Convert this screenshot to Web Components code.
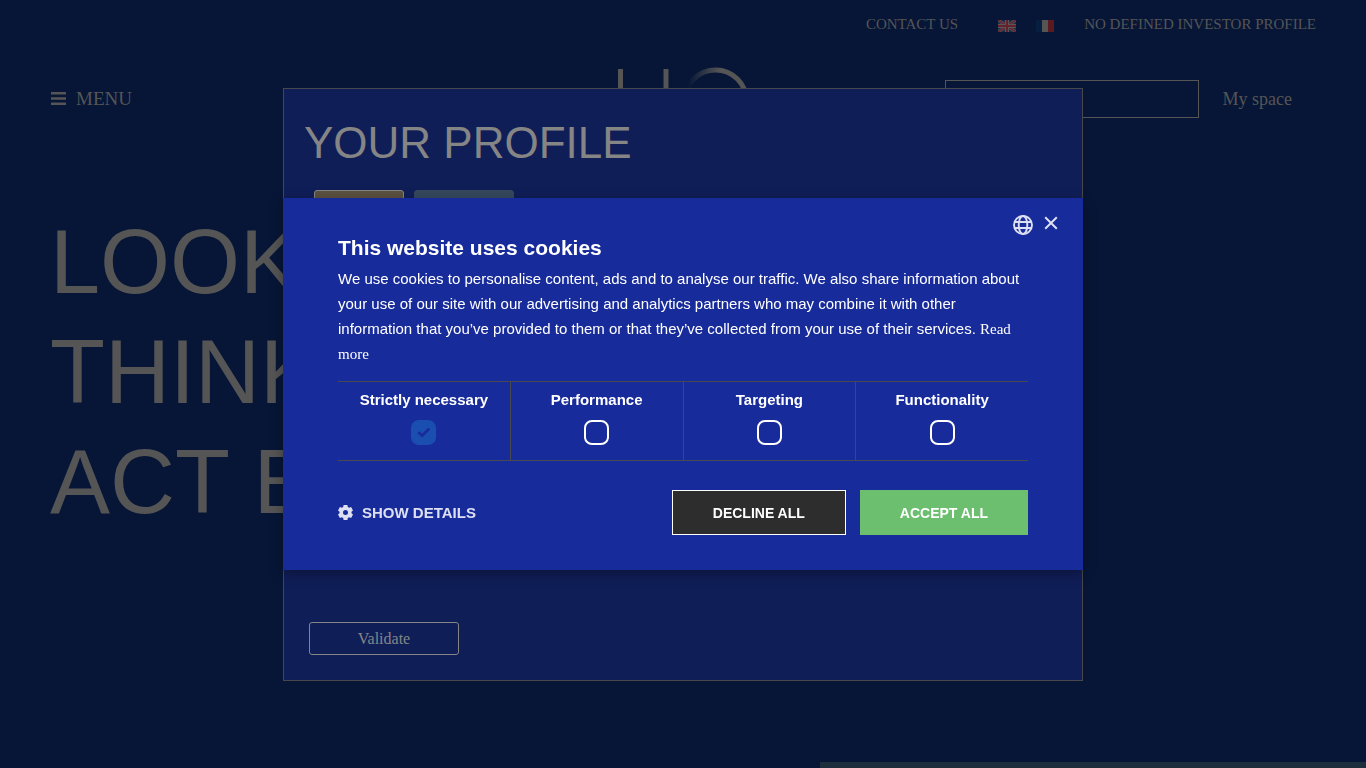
<!DOCTYPE html>
<html lang="en">
<head>
<meta charset="utf-8">
<title>Your profile</title>
<style>
  body {
    margin: 0;
    background: #071637;
    color: #555;
    font-family: "Liberation Serif", serif;
  }
  main {
    display: flex;
    flex-direction: column;
    height: 100vh;
    overflow: hidden;
  }
</style>
</head>
<body>
<main>
  <site-header></site-header>
  <hero-title>
    <span>LOOK</span>
    <span>THINK</span>
    <span>ACT E</span>
  </hero-title>
  <bottom-strip></bottom-strip>
</main>
<profile-dialog></profile-dialog>
<cookie-dialog>
  <span slot="title">This website uses cookies</span>
  We use cookies to personalise content, ads and to analyse our traffic. We also share information about your use of our site with our advertising and analytics partners who may combine it with other information that you’ve provided to them or that they’ve collected from your use of their services.
  <cookie-category slot="categories" label="Strictly necessary" required></cookie-category>
  <cookie-category slot="categories" label="Performance"></cookie-category>
  <cookie-category slot="categories" label="Targeting"></cookie-category>
  <cookie-category slot="categories" label="Functionality"></cookie-category>
</cookie-dialog>

<script>
class BaseElement extends HTMLElement {
  connectedCallback() {
    if (this.shadowRoot) return;
    this.attachShadow({ mode: "open" });
    const template = document.createElement("template");
    template.innerHTML = `<style>${this.constructor.style}</style>${this.template}`;
    this.shadowRoot.appendChild(template.content.cloneNode(true));
  }

  get template() {
    return "";
  }
}

class SiteHeader extends BaseElement {
  static get style() {
    return `
    :host {
      display: block;
      padding: 0 50px;
    }
    a {
      color: inherit;
      text-decoration: none;
    }
    svg {
      display: block;
    }
    .top {
      display: flex;
      justify-content: flex-end;
      align-items: center;
      height: 48px;
      font-size: 15px;
    }
    .flags {
      display: flex;
      gap: 20px;
      margin: 0 30px 0 40px;
      padding-top: 4px;
    }
    .bar {
      display: grid;
      grid-template-columns: 1fr auto 1fr;
      align-items: center;
      margin-top: 19px;
    }
    .menu {
      display: flex;
      align-items: center;
      gap: 10px;
      justify-self: start;
      border: 0;
      background: none;
      padding: 0 0 0 1px;
      color: inherit;
      font-family: inherit;
      font-size: 19px;
    }
    .tools {
      display: flex;
      justify-content: flex-end;
      align-items: center;
      gap: 24px;
      padding-right: 24px;
      font-size: 18px;
    }
    input {
      box-sizing: border-box;
      width: 254px;
      height: 38px;
      border: 1px solid #555;
      background: none;
      color: inherit;
      font: inherit;
    }
    `;
  }

  get template() {
    return `
    <nav class="top">
      <a href="#contact">CONTACT US</a>
      <div class="flags">
        <a href="#en" aria-label="English">
          <svg width="18" height="12" viewBox="0 0 18 12">
            <path fill="#1b2c4c" d="M0 0h18v12H0z"/>
            <path stroke="#5b5558" stroke-width="3" d="M0 0l18 12M18 0L0 12"/>
            <path stroke="#622832" stroke-width="1.8" d="M0 0l18 12M18 0L0 12"/>
            <path stroke="#5b5558" stroke-width="4" d="M9 0v12M0 6h18"/>
            <path stroke="#64232c" stroke-width="2" d="M9 0v12M0 6h18"/>
          </svg>
        </a>
        <a href="#fr" aria-label="Français">
          <svg width="18" height="12" viewBox="0 0 18 12">
            <path fill="#061f40" d="M0 0h6v12H0z"/>
            <path fill="#555" d="M6 0h6v12H6z"/>
            <path fill="#5b1a20" d="M12 0h6v12h-6z"/>
          </svg>
        </a>
      </div>
      <a href="#investor">NO DEFINED INVESTOR PROFILE</a>
    </nav>
    <div class="bar">
      <button class="menu">
        <svg width="15" height="14" viewBox="0 0 15 14" fill="currentColor">
          <path d="M0 0h15v2.6H0zM0 5.2h15v2.6H0zM0 10.4h15V13H0z"/>
        </svg>
        MENU
      </button>
      <svg width="133" height="64" viewBox="0 0 133 64" fill="none" stroke-width="5" role="img" aria-label="Home">
        <linearGradient id="fade" gradientUnits="userSpaceOnUse" x1="71" y1="0" x2="103" y2="0">
          <stop offset="0" stop-color="#555" stop-opacity="0"/>
          <stop offset="1" stop-color="#555"/>
        </linearGradient>
        <path stroke="#555" d="M3.500 2v60M49 2v60"/>
        <circle cx="98.500" cy="34" r="31" stroke="url(#fade)"/>
      </svg>
      <div class="tools">
        <input type="search" aria-label="Search">
        <a href="#space">My space</a>
      </div>
    </div>
    `;
  }
}

class HeroTitle extends BaseElement {
  static get style() {
    return `
    :host {
      display: block;
      padding: 76px 50px 0;
    }
    h1 {
      display: flex;
      flex-direction: column;
      margin: 0;
      font: 90px/110px "Liberation Sans", sans-serif;
    }
    `;
  }

  get template() {
    return `<h1><slot></slot></h1>`;
  }
}

class BottomStrip extends BaseElement {
  static get style() {
    return `
    :host {
      display: block;
      align-self: flex-end;
      width: 40%;
      height: 6px;
      margin-top: auto;
      background: #1f2e3c;
    }
    `;
  }
}

class ProfileDialog extends BaseElement {
  static get style() {
    return `
    :host {
      position: fixed;
      inset: 0;
      display: flex;
      justify-content: center;
      align-items: center;
    }
    section {
      box-sizing: border-box;
      display: flex;
      flex-direction: column;
      width: 800px;
      max-width: 100%;
      min-height: 593px;
      border: 1px solid #48484c;
      background: #101e58;
      padding: 29px 20px 25px;
      color: #858585;
    }
    h2 {
      margin: 0;
      font: 44px/50px "Liberation Sans", sans-serif;
    }
    .choices {
      display: flex;
      gap: 10px;
      margin: 22px 10px 0;
    }
    button {
      box-sizing: border-box;
      height: 33px;
      border: 1px solid #858585;
      border-radius: 3px;
      background: none;
      color: inherit;
      font-family: inherit;
      font-size: 16px;
    }
    .language {
      width: 90px;
      background: #5b5140;
    }
    .country {
      width: 100px;
      border-color: #35485c;
      background: #35485c;
    }
    .validate {
      width: 150px;
      margin: auto 5px 0;
      padding-top: 3px;
    }
    `;
  }

  get template() {
    return `
    <section role="dialog" aria-labelledby="title">
      <h2 id="title">YOUR PROFILE</h2>
      <div class="choices">
        <button class="language" aria-label="Language"></button>
        <button class="country" aria-label="Country"></button>
      </div>
      <button class="validate">Validate</button>
    </section>
    `;
  }
}

class CookieCategory extends BaseElement {
  static get style() {
    return `
    :host {
      flex: 1;
      border-right: 1px solid #48484f;
    }
    :host(:last-of-type) {
      border-right: 0;
    }
    label {
      display: flex;
      flex-direction: column;
      align-items: center;
      gap: 10px;
      padding: 8px 0 15px;
      font-size: 15px;
      font-weight: bold;
      line-height: 20px;
    }
    input {
      appearance: none;
      box-sizing: border-box;
      display: grid;
      place-items: center;
      width: 25px;
      height: 25px;
      margin: 0;
      border: 2px solid #fff;
      border-radius: 8px;
    }
    input:checked {
      border-color: #1a4eaf;
      background: #1a4eaf;
    }
    input:checked::after {
      content: "";
      width: 13px;
      height: 10px;
      background: #182b9a;
      clip-path: polygon(0 56%, 15% 38%, 36% 62%, 85% 0, 100% 17%, 37% 100%);
    }
    `;
  }

  get template() {
    const checked = this.hasAttribute("required") ? "checked disabled" : "";
    return `
    <label>${this.getAttribute("label")}
      <input type="checkbox" ${checked}>
    </label>
    `;
  }
}

class CookieDialog extends BaseElement {
  static get style() {
    return `
    :host {
      position: fixed;
      inset: 0;
      display: flex;
      justify-content: center;
      align-items: center;
      color: #fff;
      font-family: "Liberation Sans", sans-serif;
    }
    section {
      position: relative;
      box-sizing: border-box;
      width: 800px;
      max-width: 100%;
      background: #182b9a;
      box-shadow: 0 4px 12px rgba(0, 0, 0, 0.35);
      padding: 35px 55px;
    }
    svg {
      display: block;
    }
    button {
      border: 0;
      background: none;
      padding: 0;
      color: inherit;
      font-family: inherit;
      font-weight: bold;
    }
    .corner {
      position: absolute;
      top: 15px;
      right: 25px;
      display: flex;
      gap: 10px;
      color: #dde0f2;
    }
    h2 {
      margin: 0 0 3px;
      font-size: 21px;
      line-height: 30px;
    }
    p {
      margin: 0;
      font-size: 15px;
      line-height: 25px;
    }
    p a {
      color: inherit;
      font-family: "Liberation Serif", serif;
      line-height: 20px;
      text-decoration: none;
    }
    .categories {
      display: flex;
      margin: 15px 0 29px;
      border-top: 1px solid #48484f;
      border-bottom: 1px solid #48484f;
    }
    .actions {
      display: flex;
      align-items: center;
      gap: 14px;
    }
    .details {
      display: flex;
      align-items: center;
      gap: 9px;
      margin-right: auto;
      color: #dde0f2;
      font-size: 15px;
    }
    .decline,
    .accept {
      height: 45px;
      padding: 0 40px;
      font-size: 14px;
    }
    .decline {
      border: 1px solid #fff;
      background: #2d2d2d;
    }
    .accept {
      background: #6bbf6e;
    }
    `;
  }

  get template() {
    return `
    <section role="dialog" aria-labelledby="title">
      <div class="corner">
        <button aria-label="Language">
          <svg width="22" height="24" viewBox="0 0 22 24" fill="none" stroke="currentColor" stroke-width="1.900">
            <circle cx="11" cy="12" r="9"/>
            <ellipse cx="11" cy="12" rx="4.300" ry="9"/>
            <path d="M3 9h16M3 15h16"/>
          </svg>
        </button>
        <button aria-label="Close">
          <svg width="14" height="20" viewBox="0 0 14 20" fill="none" stroke="currentColor" stroke-width="2">
            <path d="M1.200 2.200l11.600 11.600M12.800 2.200L1.200 13.800"/>
          </svg>
        </button>
      </div>
      <h2 id="title"><slot name="title"></slot></h2>
      <p><slot></slot> <a href="#policy">Read more</a></p>
      <div class="categories"><slot name="categories"></slot></div>
      <div class="actions">
        <button class="details">
          <svg width="15" height="15" viewBox="0 0 15 15" fill="currentColor">
            <path fill-rule="evenodd" d="M5.600 0h3.800l.4 2 1.300.8 2-.7L15 5.400l-1.500 1.400v1.400L15 9.600l-1.900 3.300-2-.7-1.300.8-.4 2H5.600l-.4-2-1.300-.8-2 .7L0 9.600l1.500-1.400V6.800L0 5.400l1.900-3.300 2 .7L5.200 2zM7.500 5a2.500 2.500 0 1 0 0 5 2.500 2.500 0 0 0 0-5z"/>
          </svg>
          SHOW DETAILS
        </button>
        <button class="decline">DECLINE ALL</button>
        <button class="accept">ACCEPT ALL</button>
      </div>
    </section>
    `;
  }
}

customElements.define("site-header", SiteHeader);
customElements.define("hero-title", HeroTitle);
customElements.define("bottom-strip", BottomStrip);
customElements.define("profile-dialog", ProfileDialog);
customElements.define("cookie-category", CookieCategory);
customElements.define("cookie-dialog", CookieDialog);
</script>
</body>
</html>
